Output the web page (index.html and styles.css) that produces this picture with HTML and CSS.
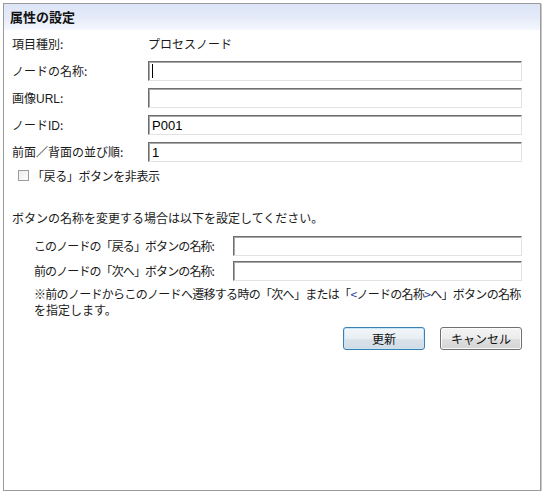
FILE: index.html
```html
<!DOCTYPE html>
<html lang="ja">
<head>
<meta charset="utf-8">
<title>属性の設定</title>
<link rel="stylesheet" href="styles.css">
</head>
<body>
<div class="frame">
  <div class="header">属性の設定</div>
  <div class="content">
    <div class="grid">
      <div class="label first">項目種別:</div>
      <div class="value first">プロセスノード</div>
      <div class="label">ノードの名称:</div>
      <div class="field"><span class="caret"></span></div>
      <div class="label">画像<span class="lat">URL</span>:</div>
      <div class="field"></div>
      <div class="label">ノード<span class="lat">ID</span>:</div>
      <div class="field"><span class="lat">P001</span></div>
      <div class="label">前面／背面の並び順:</div>
      <div class="field"><span class="lat">1</span></div>
    </div>
    <div class="check-row"><span class="checkbox"></span><span class="check-text">「戻る」ボタンを非表示</span></div>
    <p class="message">ボタンの名称を変更する場合は以下を設定してください。</p>
    <div class="sub">
      <div class="subgrid">
        <div class="label tight">このノードの「戻る」ボタンの名称:</div>
        <div class="field"></div>
        <div class="label tight">前のノードの「次へ」ボタンの名称:</div>
        <div class="field"></div>
      </div>
      <p class="note"><span class="line1">※前のノードからこのノードへ遷移する時の「次へ」または「<span class="lt">&lt;</span>ノードの名称<span class="lt">&gt;</span>へ」ボタンの名称</span><br>を指定します。</p>
    </div>
    <div class="buttons">
      <button class="btn primary">更新</button>
      <button class="btn">キャンセル</button>
    </div>
  </div>
</div>
</body>
</html>
```
FILE: styles.css
```css
html, body {
  margin: 0;
  padding: 0;
  background: #ffffff;
}
body {
  font-family: "Noto Sans CJK JP", "DejaVu Sans", sans-serif;
  font-size: 12px;
  color: #1a1a1a;
}
.frame {
  box-sizing: border-box;
  width: 538px;
  height: 488px;
  margin: 3px 0 0 3px;
  border: 1px solid #9a9a9a;
  box-shadow: 1px 1px 0 #c8c8c8;
  background: #fff;
}
.header {
  height: 26px;
  line-height: 25px;
  padding-left: 6px;
  font-size: 13px;
  font-weight: bold;
  color: #111;
  background: linear-gradient(to bottom, #dce5f7 0%, #e4eaf8 50%, #f4f7fd 100%);
}
.content {
  padding: 4px 18px 0 8px;
}
.grid {
  display: grid;
  grid-template-columns: 136px 1fr;
  grid-auto-rows: 20px;
  row-gap: 7px;
  align-items: center;
}
.grid .first {
  height: 18px;
  line-height: 18px;
}
.label, .value {
  line-height: 20px;
  white-space: nowrap;
}
.label.tight {
  letter-spacing: -0.9px;
}
.lat {
  font-family: "Liberation Sans", Arial, sans-serif;
  font-size: 12px;
  letter-spacing: 0;
}
.field {
  box-sizing: border-box;
  height: 20px;
  border-top: 1px solid #6e6e6e;
  border-left: 1px solid #6e6e6e;
  border-right: 1px solid #e2e2e2;
  border-bottom: 1px solid #e2e2e2;
  box-shadow: inset 1px 1px 0 #a8a8a8;
  background: #fff;
  padding: 0 0 0 3px;
  display: flex;
  align-items: center;
}
.field .lat {
  font-size: 13px;
  color: #000;
}
.caret {
  display: inline-block;
  width: 1px;
  height: 14px;
  background: #000;
}
.check-row {
  display: flex;
  align-items: center;
  height: 16px;
  margin-top: 5px;
  padding-left: 6px;
  gap: 3px;
  white-space: nowrap;
}
.check-text {
  letter-spacing: -0.4px;
}
.checkbox {
  box-sizing: border-box;
  width: 11px;
  height: 11px;
  border: 1px solid #9c9c9c;
  background: linear-gradient(135deg, #ececec, #ffffff);
}
.message {
  margin: 27px 0 0 0;
  line-height: 16px;
  white-space: nowrap;
}
.sub {
  padding-left: 22px;
}
.subgrid {
  display: grid;
  grid-template-columns: 199px 1fr;
  grid-auto-rows: 20px;
  row-gap: 5px;
  align-items: center;
  margin-top: 10px;
}
.note {
  margin: 5px 0 0 0;
  line-height: 16px;
}
.line1 {
  white-space: nowrap;
  letter-spacing: -0.7px;
}
.lt {
  color: #1f3f9f;
}
.buttons {
  display: flex;
  justify-content: flex-end;
  gap: 15px;
  margin-top: 9px;
}
.btn {
  box-sizing: border-box;
  width: 82px;
  height: 23px;
  padding: 0;
  font-family: "Noto Sans CJK JP", "DejaVu Sans", sans-serif;
  font-size: 12px;
  color: #111;
  border: 1px solid #707070;
  border-radius: 3px;
  background: linear-gradient(to bottom, #f4f4f4 0%, #ececec 50%, #dfdfdf 51%, #d4d4d4 100%);
  box-shadow: inset 0 0 0 1px #fbfbfb;
}
.btn.primary {
  border-color: #3c7fb1;
  background: linear-gradient(to bottom, #f2f6f9 0%, #e8eef3 50%, #dbe3ea 51%, #d0dbe4 100%);
  box-shadow: inset 0 0 0 1px #c8e4f7;
}
```
